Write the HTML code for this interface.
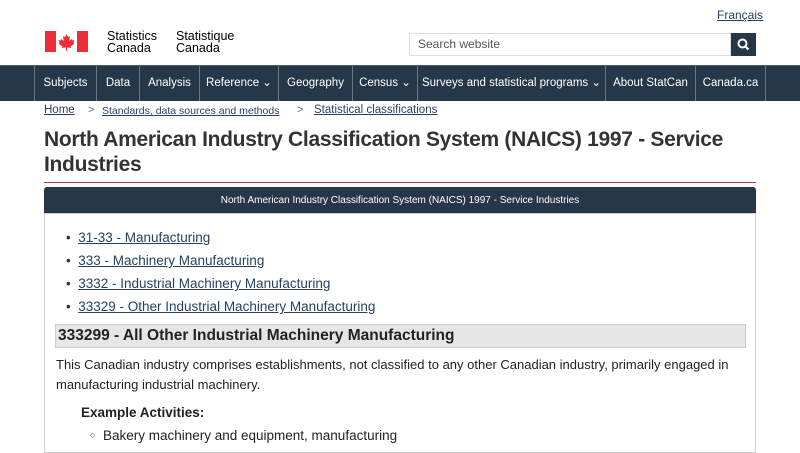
<!DOCTYPE html>
<html><head><meta charset="utf-8"><style>
*{margin:0;padding:0;box-sizing:border-box}
body{width:800px;height:450px;overflow:hidden;background:#fff;font-family:"Liberation Sans",sans-serif;color:#333;position:relative}
.a{position:absolute;white-space:nowrap}
a{color:#284162;text-decoration:underline}
.nav{position:absolute;top:65px;left:0;width:800px;height:36px;background:#26374a;border-top:1px solid #4a5a6b}
.nav div{position:absolute;top:0;height:35px;border-left:1px solid #6b7785;color:#fff;font-size:11.5px;line-height:35px;text-align:center}
</style></head><body>
<a class="a" style="left:717px;top:8px;font-size:12px">Français</a>
<svg class="a" style="left:45px;top:31px" width="43" height="21" viewBox="0 0 43 21">
<rect x="0" y="0" width="11" height="21" fill="#eb2d37"/><rect x="32" y="0" width="11" height="21" fill="#eb2d37"/>
<path d="M21.5 3 L23 6 L25 5.3 L24.3 10 L27 8 L27.5 9.5 L29.5 9.3 L28.5 12 L29.5 12.6 L25.5 15.5 L26 17 L22 16.4 L22 20 L21 20 L21 16.4 L17 17 L17.5 15.5 L13.5 12.6 L14.5 12 L13.5 9.3 L15.5 9.5 L16 8 L18.7 10 L18 5.3 L20 6 Z" fill="#eb2d37"/></svg>
<div class="a" style="left:107px;top:30px;font-size:12.5px;line-height:12px;color:#000">Statistics<br>Canada</div>
<div class="a" style="left:176px;top:30px;font-size:12.5px;line-height:12px;color:#000">Statistique<br>Canada</div>
<div class="a" style="left:409px;top:33px;width:322px;height:23px;border:1px solid #ddd;font-size:12px;line-height:21px;padding-left:8px;color:#555">Search website</div>
<div class="a" style="left:731px;top:33px;width:25px;height:23px;background:#26374a"><svg width="25" height="23"><circle cx="11.5" cy="10.5" r="4" stroke="#fff" stroke-width="2" fill="none"/><line x1="14.5" y1="13.5" x2="17.5" y2="16.5" stroke="#fff" stroke-width="2.2"/></svg></div>
<div class="nav">
<div style="left:34px;width:62px">Subjects</div>
<div style="left:96px;width:43px">Data</div>
<div style="left:139px;width:60px">Analysis</div>
<div style="left:199px;width:79px">Reference ⌄</div>
<div style="left:278px;width:74px">Geography</div>
<div style="left:352px;width:65px">Census ⌄</div>
<div style="left:417px;width:188px">Surveys and statistical programs ⌄</div>
<div style="left:605px;width:90px">About StatCan</div>
<div style="left:695px;width:70px">Canada.ca</div>
<div style="left:765px;width:1px"></div>
</div>
<a class="a" style="left:44px;top:104px;font-size:11.5px">Home</a>
<span class="a" style="left:88px;top:104px;font-size:11px;color:#666">&gt;</span>
<a class="a" style="left:102px;top:104px;font-size:10.5px;line-height:14px">Standards, data sources and methods</a>
<span class="a" style="left:297px;top:104px;font-size:11px;color:#666">&gt;</span>
<a class="a" style="left:314px;top:104px;font-size:11.5px">Statistical classifications</a>
<div class="a" style="left:44px;top:127px;font-size:21px;font-weight:bold;line-height:25px;color:#333;white-space:normal;width:710px;letter-spacing:-0.3px">North American Industry Classification System (NAICS) 1997 - Service Industries</div>
<div class="a" style="left:44px;top:182px;width:712px;height:1px;background:#af3c43"></div>
<div class="a" style="left:44px;top:187px;width:712px;height:27px;background:#26374a;border-radius:3px 3px 0 0;color:#fff;font-size:10px;text-align:center;line-height:27px">North American Industry Classification System (NAICS) 1997 - Service Industries</div>
<div class="a" style="left:44px;top:213px;width:712px;height:240px;border:1px solid #ccc"></div>
<div class="a" style="left:66px;top:226px;font-size:13.5px;line-height:23px">
<div>• &nbsp;<a>31-33 - Manufacturing</a></div>
<div>• &nbsp;<a>333 - Machinery Manufacturing</a></div>
<div>• &nbsp;<a>3332 - Industrial Machinery Manufacturing</a></div>
<div>• &nbsp;<a>33329 - Other Industrial Machinery Manufacturing</a></div>
</div>
<div class="a" style="left:55px;top:324px;width:691px;height:24px;background:#e6e6e6;border:1px solid #ccc;font-size:15.5px;font-weight:bold;line-height:22px;padding-left:2px;color:#222">333299 - All Other Industrial Machinery Manufacturing</div>
<div class="a" style="left:56px;top:355px;font-size:13px;line-height:20px;color:#222">This Canadian industry comprises establishments, not classified to any other Canadian industry, primarily engaged in<br>manufacturing industrial machinery.</div>
<div class="a" style="left:81px;top:405px;font-size:13.5px;font-weight:bold;color:#222">Example Activities:</div>
<div class="a" style="left:90px;top:428px;font-size:13.5px;color:#222"><span style="font-size:9px;vertical-align:2px">○</span>&nbsp; Bakery machinery and equipment, manufacturing</div>
</body></html>
